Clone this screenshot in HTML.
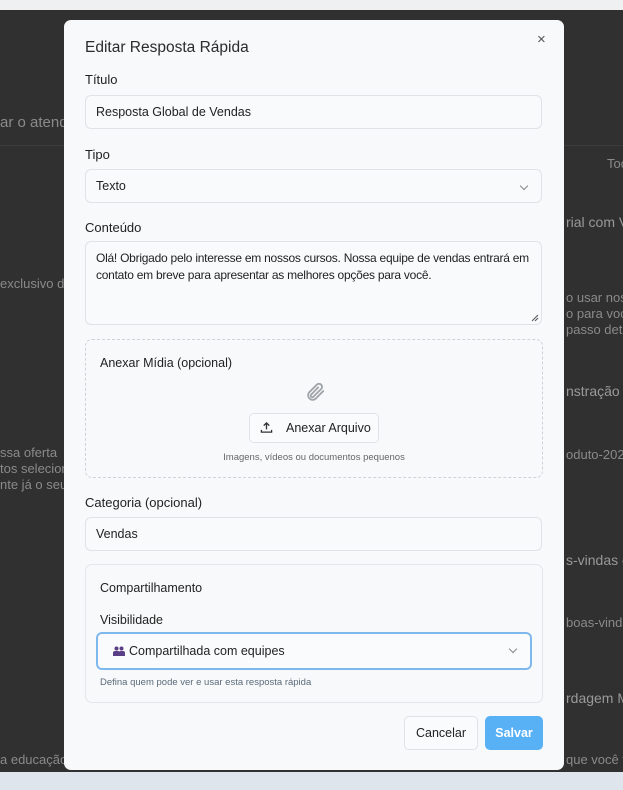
<!DOCTYPE html>
<html><head><meta charset="utf-8"><style>
*{box-sizing:border-box;margin:0;padding:0}
body{width:623px;height:790px;overflow:hidden;background:#303030;font-family:"Liberation Sans",sans-serif;position:relative;color:#222}
.a{position:absolute}
.bgt{position:absolute;color:#8a8a8a;font-size:13px;white-space:nowrap}
.modal{position:absolute;left:64px;top:20px;width:500px;height:750px;background:#f8f9fa;border-radius:7px}
.lbl{position:absolute;left:21px;font-size:13px;color:#222}
.inp{position:absolute;left:21px;width:457px;height:34px;border:1px solid #dfe2e6;border-radius:6px;background:#f9fafb;font-size:12.5px;padding:0 10px;line-height:32px;color:#222}
.chev{position:absolute;right:14px;top:13px;width:6px;height:6px;border-right:1px solid #888;border-bottom:1px solid #888;transform:rotate(45deg)}
</style></head><body>
<div class="a" style="left:0;top:0;width:623px;height:10px;background:#eff0f2"></div>
<div class="a" style="left:0;top:145px;width:623px;height:1px;background:#3c3c3c"></div>
<div class="a" style="left:0;top:772px;width:623px;height:18px;background:#dfe5ec"></div>
<div class="bgt" style="left:0;top:114px;font-size:15px">ar o atend</div>
<div class="bgt" style="left:0;top:276px">exclusivo do</div>
<div class="bgt" style="left:0;top:445px;line-height:16px">ssa oferta<br>tos seleciona<br>nte já o seu!</div>
<div class="bgt" style="left:0;top:752px">a educação</div>
<div class="bgt" style="left:566px;top:214px;font-size:14px;color:#999">rial com V</div>
<div class="bgt" style="left:566px;top:383px;font-size:14px;color:#999">nstração</div>
<div class="bgt" style="left:566px;top:552px;font-size:14px;color:#999">s-vindas co</div>
<div class="bgt" style="left:566px;top:690px;font-size:14px;color:#999">rdagem M</div>
<div class="bgt" style="left:566px;top:290px;line-height:16px">o usar nossa<br>o para você<br>passo detal</div>
<div class="bgt" style="left:566px;top:447px">oduto-2025</div>
<div class="bgt" style="left:566px;top:615px">boas-vinda</div>
<div class="bgt" style="left:566px;top:752px">que você te</div>
<div class="bgt" style="left:607px;top:156px">Tod</div>
<div class="modal">
<div class="a" style="left:21px;top:19px;font-size:15.5px;color:#2b2b2b">Editar Resposta Rápida</div>
<div class="a" style="left:473px;top:11px;font-size:15px;color:#555">×</div>
<div class="lbl" style="top:52px">Título</div>
<div class="inp" style="top:75px">Resposta Global de Vendas</div>
<div class="lbl" style="top:127px">Tipo</div>
<div class="inp" style="top:149px">Texto<div class="chev"></div></div>
<div class="lbl" style="top:200px">Conteúdo</div>
<div class="inp" style="top:221px;height:84px;line-height:17px;padding-top:8px;font-size:12px;letter-spacing:-0.25px">Olá! Obrigado pelo interesse em nossos cursos. Nossa equipe de vendas entrará em contato em breve para apresentar as melhores opções para você.
<svg class="a" style="right:2px;bottom:2px" width="8" height="8" viewBox="0 0 8 8" stroke="#555" stroke-width="1"><path d="M1 7L7 1M4 7L7 4"/></svg></div>
<div class="a" style="left:21px;top:319px;width:458px;height:139px;border:1px dashed #cfd3d8;border-radius:7px">
<div class="a" style="left:14px;top:16px;font-size:12.5px">Anexar Mídia (opcional)</div>
<svg class="a" style="left:218px;top:41px" width="22" height="22" viewBox="0 0 24 24" fill="none" stroke="#a0a4ab" stroke-width="2" stroke-linecap="round"><path d="M21 11l-8.5 8.5a5 5 0 0 1-7-7L14 4a3.3 3.3 0 0 1 4.7 4.7l-8.5 8.5a1.7 1.7 0 0 1-2.4-2.4L15.5 7"/></svg>
<div class="a" style="left:163px;top:73px;width:130px;height:30px;border:1px solid #dfe2e6;border-radius:5px;background:#fafbfc;font-size:12.5px;line-height:28px;padding-left:36px">Anexar Arquivo
<svg class="a" style="left:10px;top:7px" width="13" height="13" viewBox="0 0 14 14" fill="none" stroke="#333" stroke-width="1.4"><path d="M7 9V2M4 5l3-3 3 3M1.5 9.5v2.5h11V9.5"/></svg></div>
<div class="a" style="left:0;width:100%;top:112px;text-align:center;font-size:9.5px;color:#666">Imagens, vídeos ou documentos pequenos</div>
</div>
<div class="lbl" style="top:475px">Categoria (opcional)</div>
<div class="inp" style="top:497px">Vendas</div>
<div class="a" style="left:21px;top:544px;width:458px;height:139px;border:1px solid #e3e6ea;border-radius:7px">
<div class="a" style="left:14px;top:16px;font-size:12.5px">Compartilhamento</div>
<div class="a" style="left:14px;top:48px;font-size:12.5px">Visibilidade</div>
<div class="a" style="left:10px;top:67px;width:436px;height:38px;border:2px solid #7fb8ee;border-radius:6px;background:#fafbfc;font-size:12.5px;line-height:34px;padding-left:31px">
<svg class="a" style="left:15px;top:12px" width="12" height="10" viewBox="0 0 12 10" fill="#5a3f86"><circle cx="3.5" cy="2.5" r="2"/><circle cx="8.5" cy="2.5" r="2"/><path d="M0 10V7a2 2 0 0 1 2-2h3a2 2 0 0 1 2 2v3zM6 10V7a2 2 0 0 1 2-2h2a2 2 0 0 1 2 2v3z"/></svg>
Compartilhada com equipes<div class="chev" style="top:12px"></div></div>
<div class="a" style="left:14px;top:112px;font-size:9.5px;color:#5a6a7a">Defina quem pode ver e usar esta resposta rápida</div>
</div>
<div class="a" style="left:340px;top:696px;width:74px;height:34px;border:1px solid #dfe2e6;border-radius:5px;background:#fafbfc;font-size:12.5px;text-align:center;line-height:32px">Cancelar</div>
<div class="a" style="left:421px;top:696px;width:58px;height:34px;border-radius:5px;background:#58b0f5;color:#fff;font-weight:bold;font-size:12.5px;text-align:center;line-height:34px">Salvar</div>
</div>
</body></html>
